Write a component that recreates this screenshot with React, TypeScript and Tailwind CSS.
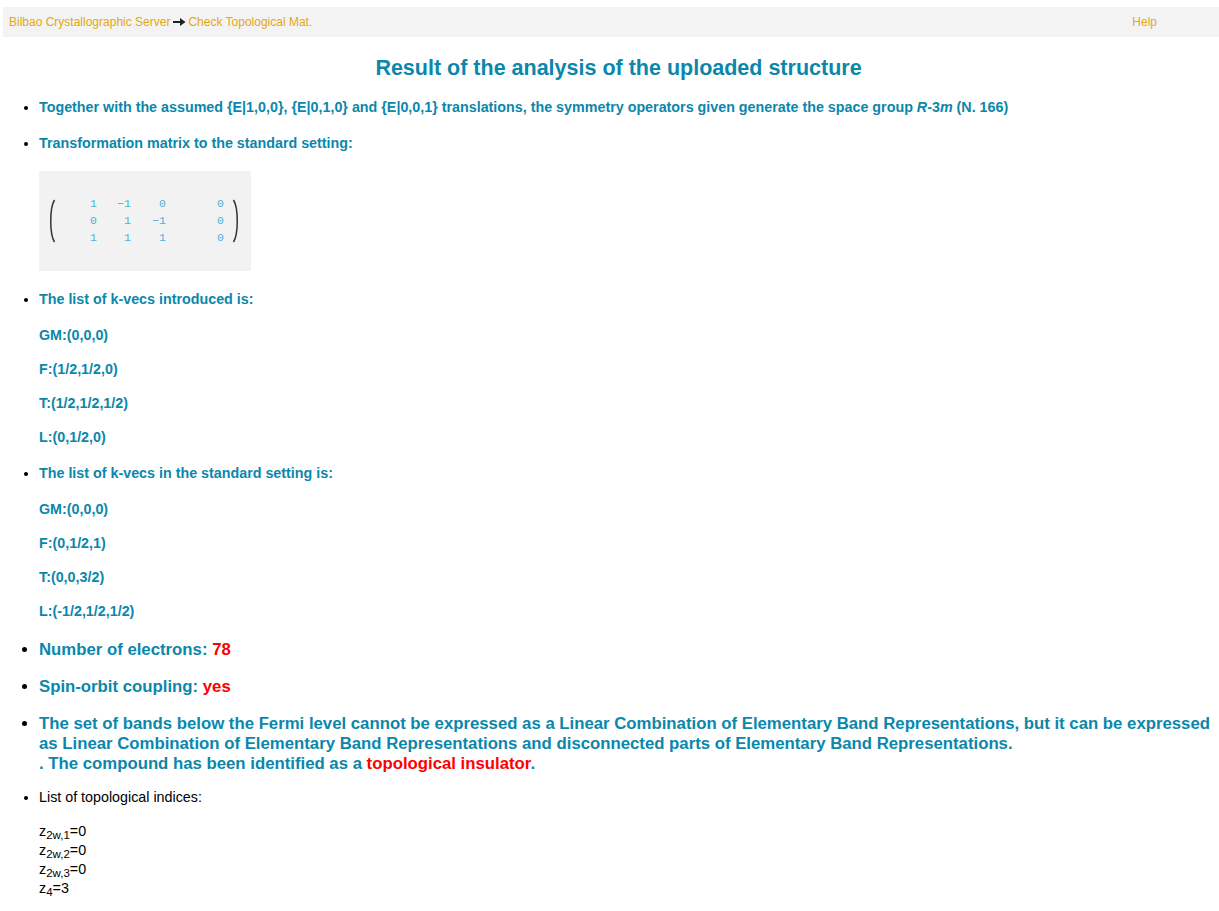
import React from "react";

const teal = "text-[#0a87ab]";

function Paren({ flip }: { flip?: boolean }) {
  return (
    <svg width="8" height="44" viewBox="0 0 8 44" className={flip ? "-scale-x-100" : ""}>
      <path d="M6.5 1 C1.5 9 1.5 35 6.5 43" stroke="#333" strokeWidth="1.5" fill="none" />
    </svg>
  );
}

function Matrix() {
  const rows = [
    ["1", "\u22121", "0", "0"],
    ["0", "1", "\u22121", "0"],
    ["1", "1", "1", "0"],
  ];
  const widths = ["w-[41px]", "w-[34px]", "w-[35px]", "w-[58px]"];
  return (
    <div className="mt-[20px] flex h-[100px] w-[212px] items-center bg-[#f2f2f2] pl-[9px]">
      <Paren />
      <div className="flex flex-col font-['Liberation_Mono',monospace] text-[11.5px] font-normal text-[#4cb0dc]">
        {rows.map((r, i) => (
          <div key={i} className="flex h-[17px] items-center">
            {r.map((c, j) => (
              <span key={j} className={`${widths[j]} text-right`}>
                {c}
              </span>
            ))}
          </div>
        ))}
      </div>
      <div className="ml-[8px]">
        <Paren flip />
      </div>
    </div>
  );
}

function Z({ sub, val }: { sub: string; val: string }) {
  return (
    <div className="h-[19px] leading-[19px]">
      z<sub className="text-[11.5px]">{sub}</sub>={val}
    </div>
  );
}

function Arrow() {
  return (
    <svg width="13" height="10" viewBox="0 0 13 10" className="ml-[3px] mr-[2px] inline-block align-[-1px]">
      <path d="M0 5 H9" stroke="#222" strokeWidth="2" />
      <path d="M7 1 L12.5 5 L7 9 Z" fill="#222" />
    </svg>
  );
}

export default function App() {
  return (
    <div className="min-h-[911px] bg-white pt-[7px] font-['Liberation_Sans',Arial,sans-serif]">
      <div className="ml-[3px] flex h-[30px] items-center justify-between bg-[#f3f3f3] pl-[6px] pr-[62px] text-[12px] text-[#e5a812]">
        <div className="flex items-center">
          Bilbao Crystallographic Server<Arrow />Check Topological Mat.
        </div>
        <div>Help</div>
      </div>

      <h1 className={`mt-[19px] pl-[18px] text-center text-[21.5px] font-bold leading-[24px] ${teal}`}>
        Result of the analysis of the uploaded structure
      </h1>

      <ul className="list-disc pl-[39px] text-black">
        <li className="mt-[19px] text-[14.3px] font-bold leading-[16px]">
          <span className={teal}>
            Together with the assumed {"{E|1,0,0}"}, {"{E|0,1,0}"} and {"{E|0,0,1}"} translations, the symmetry operators given generate the space group <i>R</i>-3<i>m</i> (N. 166)
          </span>
        </li>
        <li className="mt-[20px] text-[14.3px] font-bold leading-[16px]">
          <span className={teal}>Transformation matrix to the standard setting:</span>
          <Matrix />
        </li>
        <li className="mt-[20px] text-[14.3px] font-bold leading-[16px]">
          <span className={teal}>The list of k-vecs introduced is:</span>
          <div className={teal}>
            <div className="mt-[20px]">GM:(0,0,0)</div>
            <div className="mt-[18px]">F:(1/2,1/2,0)</div>
            <div className="mt-[18px]">T:(1/2,1/2,1/2)</div>
            <div className="mt-[18px]">L:(0,1/2,0)</div>
          </div>
        </li>
        <li className="mt-[20px] text-[14.3px] font-bold leading-[16px]">
          <span className={teal}>The list of k-vecs in the standard setting is:</span>
          <div className={teal}>
            <div className="mt-[20px]">GM:(0,0,0)</div>
            <div className="mt-[18px]">F:(0,1/2,1)</div>
            <div className="mt-[18px]">T:(0,0,3/2)</div>
            <div className="mt-[18px]">L:(-1/2,1/2,1/2)</div>
          </div>
        </li>
        <li className="mt-[21px] text-[16.75px] font-bold leading-[20px]">
          <span className={teal}>Number of electrons: </span>
          <span className="text-[#ff0000]">78</span>
        </li>
        <li className="mt-[17px] text-[16.75px] font-bold leading-[20px]">
          <span className={teal}>Spin-orbit coupling: </span>
          <span className="text-[#ff0000]">yes</span>
        </li>
        <li className="mt-[17px] text-[16.75px] font-bold leading-[20px]">
          <span className={teal}>
            The set of bands below the Fermi level cannot be expressed as a Linear Combination of Elementary Band Representations, but it can be expressed as Linear Combination of Elementary Band Representations and disconnected parts of Elementary Band Representations.
            <br />. The compound has been identified as a{" "}
          </span>
          <span className="text-[#ff0000]">topological insulator</span>
          <span className={teal}>.</span>
        </li>
        <li className="mt-[15px] text-[14.3px] leading-[16px] text-black">
          List of topological indices:
          <div className="mt-[17px]">
            <Z sub="2w,1" val="0" />
            <Z sub="2w,2" val="0" />
            <Z sub="2w,3" val="0" />
            <Z sub="4" val="3" />
          </div>
        </li>
      </ul>
    </div>
  );
}
